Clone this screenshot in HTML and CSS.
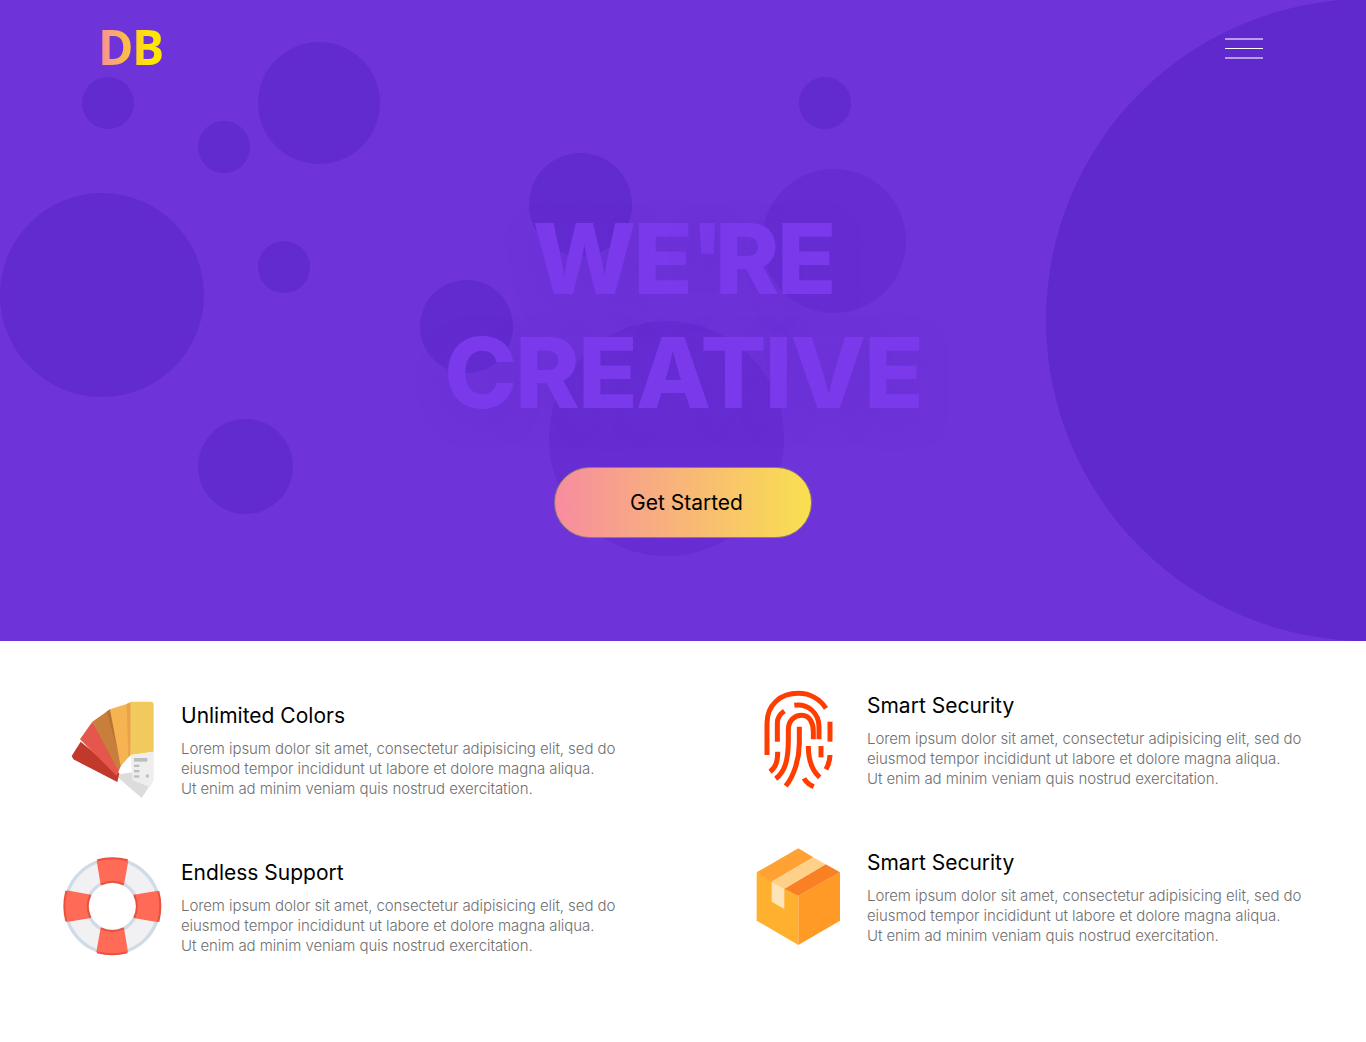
FILE: index.html
```html
<!DOCTYPE html>
<html lang="en">
<head>
    <meta charset="UTF-8">
    <meta name="viewport" content="width=device-width, initial-scale=1.0">
    <title>DB</title>
    <link rel="stylesheet" href="styles.css">
</head>
<body>
    <section class="hero">
        <div class="bubble b1"></div>
        <div class="bubble b2"></div>
        <div class="bubble b3"></div>
        <div class="bubble b4"></div>
        <div class="bubble b5"></div>
        <div class="bubble b6"></div>
        <div class="bubble b7"></div>
        <div class="bubble b8"></div>
        <div class="bubble b9 soft"></div>
        <div class="bubble b10"></div>
        <div class="bubble b11 soft"></div>
        <div class="bubble b12"></div>

        <header class="nav">
            <a class="logo" href="#">DB</a>
            <button class="menu" aria-label="Menu">
                <span class="bar"></span>
                <span class="bar mid"></span>
                <span class="bar"></span>
            </button>
        </header>

        <div class="hero-text">
            <h1><span class="tight">WE<span class="quote">'</span>RE</span><br>CREATIVE</h1>
            <a class="cta" href="#">Get Started</a>
        </div>
    </section>

    <section class="features">
        <div class="feature low">
            <svg class="icon" viewBox="9 60 300 300">
                <polygon fill="#dcdcdc" points="165,285 245,354 274,310 260,270"/>
                <polygon fill="#c0392b" points="35,228 62,185 178,280 172,306 40,238"/>
                <polygon fill="#e5574c" points="60,178 97,125 182,258 170,288"/>
                <polygon fill="#c97f3c" points="97,125 150,88 195,240 174,270"/>
                <polygon fill="#b87333" points="140,95 150,88 192,240 184,252"/>
                <polygon fill="#f6b352" points="150,88 212,68 212,225 182,258"/>
                <polygon fill="#e6a347" points="200,72 212,66 212,225 205,232"/>
                <path fill="#f2c95c" d="M212 65H272Q281 65 281 74V215L212 225Z"/>
                <polygon fill="#eeeeee" points="212,225 281,215 281,300 270,322 218,300"/>
                <rect fill="#bdbdbd" x="222" y="234" width="40" height="11"/>
                <rect fill="#bdbdbd" x="222" y="254" width="16" height="7"/>
                <rect fill="#bdbdbd" x="222" y="270" width="16" height="7"/>
                <rect fill="#bdbdbd" x="222" y="286" width="16" height="7"/>
                <circle fill="#bdbdbd" cx="262" cy="288" r="5"/>
            </svg>
            <div class="info">
                <h3>Unlimited Colors</h3>
                <p>Lorem ipsum dolor sit amet, consectetur adipisicing elit, sed do eiusmod tempor incididunt ut labore et dolore magna aliqua.<br>Ut enim ad minim veniam quis nostrud exercitation.</p>
            </div>
        </div>

        <div class="feature">
            <svg class="icon" viewBox="12 30 300 300">
                <g fill="none" stroke="#ff3d00" stroke-width="15">
                    <path d="M66 225V130C66 75 105 40 160 40C195 40 225 58 243 85"/>
                    <path d="M97 185V128C97 115 105 102 118 93"/>
                    <path d="M148 76C190 70 222 100 222 140V178"/>
                    <path d="M92 296C120 275 130 240 130 180V150C130 120 150 106 170 106C195 106 205 130 205 155V178"/>
                    <path d="M163 140V190C163 240 145 290 122 318"/>
                    <path d="M190 198C190 250 205 275 224 292"/>
                    <path d="M177 295C185 310 195 315 206 320"/>
                    <path d="M98 215C98 240 95 260 75 275"/>
                    <path d="M255 125V185"/>
                    <path d="M228 198V232"/>
                    <path d="M255 225C255 240 250 255 243 268"/>
                </g>
            </svg>
            <div class="info">
                <h3>Smart Security</h3>
                <p>Lorem ipsum dolor sit amet, consectetur adipisicing elit, sed do eiusmod tempor incididunt ut labore et dolore magna aliqua.<br>Ut enim ad minim veniam quis nostrud exercitation.</p>
            </div>
        </div>

        <div class="feature low">
            <svg class="icon" viewBox="39 36 300 300">
                <circle cx="187" cy="184" r="108" fill="none" stroke="#f1f1f3" stroke-width="72"/>
                <circle cx="187" cy="184" r="140" fill="none" stroke="#cfdbe6" stroke-width="10"/>
                <circle cx="187" cy="184" r="75" fill="none" stroke="#cfdbe6" stroke-width="10"/>
                <defs>
                    <g id="seg">
                        <path fill="#ff6b57" d="M140 47Q187 33 235 47L222 120Q187 102 152 120Z"/>
                        <path fill="none" stroke="#e9503e" stroke-width="6" d="M142 46Q187 34 233 46M153 118Q187 102 221 118"/>
                    </g>
                </defs>
                <use href="#seg"/>
                <use href="#seg" transform="rotate(90 187 184)"/>
                <use href="#seg" transform="rotate(180 187 184)"/>
                <use href="#seg" transform="rotate(270 187 184)"/>
            </svg>
            <div class="info">
                <h3>Endless Support</h3>
                <p>Lorem ipsum dolor sit amet, consectetur adipisicing elit, sed do eiusmod tempor incididunt ut labore et dolore magna aliqua.<br>Ut enim ad minim veniam quis nostrud exercitation.</p>
            </div>
        </div>

        <div class="feature">
            <svg class="icon" viewBox="12 21 300 300">
                <polygon fill="#ffb02e" points="35,97 160,168 160,315 35,242"/>
                <polygon fill="#ff9a27" points="285,97 160,168 160,315 285,242"/>
                <polygon fill="#ffa133" points="35,97 160,25 205,52 80,125"/>
                <polygon fill="#fa8024" points="118,146 242,73 285,97 160,168"/>
                <polygon fill="#ffd088" points="80,125 205,52 242,73 118,146"/>
                <polygon fill="#ffe4b8" points="80,125 118,146 118,207 80,185"/>
            </svg>
            <div class="info">
                <h3>Smart Security</h3>
                <p>Lorem ipsum dolor sit amet, consectetur adipisicing elit, sed do eiusmod tempor incididunt ut labore et dolore magna aliqua.<br>Ut enim ad minim veniam quis nostrud exercitation.</p>
            </div>
        </div>
    </section>
</body>
</html>
```

FILE: styles.css
```css
* {
    box-sizing: border-box;
}
body {
    margin: 0;
    font-family: Inter, "Open Sans", sans-serif;
    background-color: #fff;
}
a {
    text-decoration: none;
}

/* hero */
.hero {
    position: relative;
    height: 641px;
    overflow: hidden;
    background-color: #6e33d9;
}
.bubble {
    position: absolute;
    border-radius: 50%;
    background-color: #622bd0;
}
.bubble.soft {
    background-color: #672dd3;
}
.b1 { left: 82px; top: 77px; width: 52px; height: 52px; }
.b2 { left: 198px; top: 121px; width: 52px; height: 52px; }
.b3 { left: 258px; top: 42px; width: 122px; height: 122px; }
.b4 { left: 0; top: 193px; width: 204px; height: 204px; }
.b5 { left: 258px; top: 241px; width: 52px; height: 52px; }
.b6 { left: 198px; top: 419px; width: 95px; height: 95px; }
.b7 { left: 799px; top: 77px; width: 52px; height: 52px; }
.b8 { left: 529px; top: 153px; width: 103px; height: 103px; }
.b9 { left: 762px; top: 169px; width: 144px; height: 144px; }
.b10 { left: 420px; top: 280px; width: 93px; height: 93px; }
.b11 { left: 549px; top: 321px; width: 235px; height: 235px; }
.b12 { left: 1046px; top: -1px; width: 642px; height: 642px; background-color: #6029cd; }

.nav {
    position: relative;
    display: flex;
    justify-content: space-between;
    align-items: center;
    padding: 14px 103px 0 98px;
}
.logo {
    padding-bottom: 3px;
    font-family: "Open Sans", sans-serif;
    font-size: 48px;
    font-weight: 700;
    line-height: 65px;
    letter-spacing: -1.5px;
    background-image: linear-gradient(90deg, #f78ca0 0%, #ffe600 80%);
    -webkit-background-clip: text;
    background-clip: text;
    color: transparent;
}
.menu {
    display: flex;
    flex-direction: column;
    gap: 8px;
    width: 38px;
    padding: 0;
    border: none;
    background: none;
}
.bar {
    display: block;
    height: 2px;
    background-color: rgba(255, 255, 255, 0.55);
}
.bar.mid {
    height: 1px;
    background-color: #fff;
}

.hero-text {
    position: relative;
    display: flex;
    flex-direction: column;
    align-items: center;
    padding-top: 120px;
}
h1 {
    margin: 0;
    text-align: center;
    font-size: 98px;
    font-weight: 800;
    line-height: 114px;
    letter-spacing: -2px;
    color: #7a39ea;
    text-shadow: 0 10px 30px rgba(100, 45, 210, 0.35);
}
.tight {
    letter-spacing: -3px;
}
.quote {
    letter-spacing: -10px;
}
.cta {
    display: flex;
    justify-content: center;
    align-items: center;
    width: 258px;
    height: 71px;
    margin-top: 37px;
    padding-left: 7px;
    border: 1px solid #8c7d72;
    border-radius: 36px;
    background-image: linear-gradient(90deg, #f78ca0 0%, #f9e04f 100%);
    font-size: 21px;
    color: #000;
}

/* features */
.features {
    display: grid;
    grid-template-columns: 686px 1fr;
    row-gap: 57px;
    min-height: 401px;
    padding: 49px 0 0 63px;
    align-content: start;
}
.feature {
    display: flex;
    gap: 18px;
    height: 100px;
}
.feature.low {
    margin-top: 10px;
    margin-bottom: -10px;
}
.icon {
    flex: none;
    width: 100px;
    height: 100px;
    filter: blur(0.4px);
}
.info h3 {
    margin: 0;
    font-size: 21px;
    font-weight: 400;
    line-height: 32px;
    color: #000;
}
.info p {
    width: 445px;
    margin: 7px 0 0;
    font-size: 15px;
    font-weight: 300;
    line-height: 20px;
    letter-spacing: -0.08px;
    color: #6f6f6f;
}
```
